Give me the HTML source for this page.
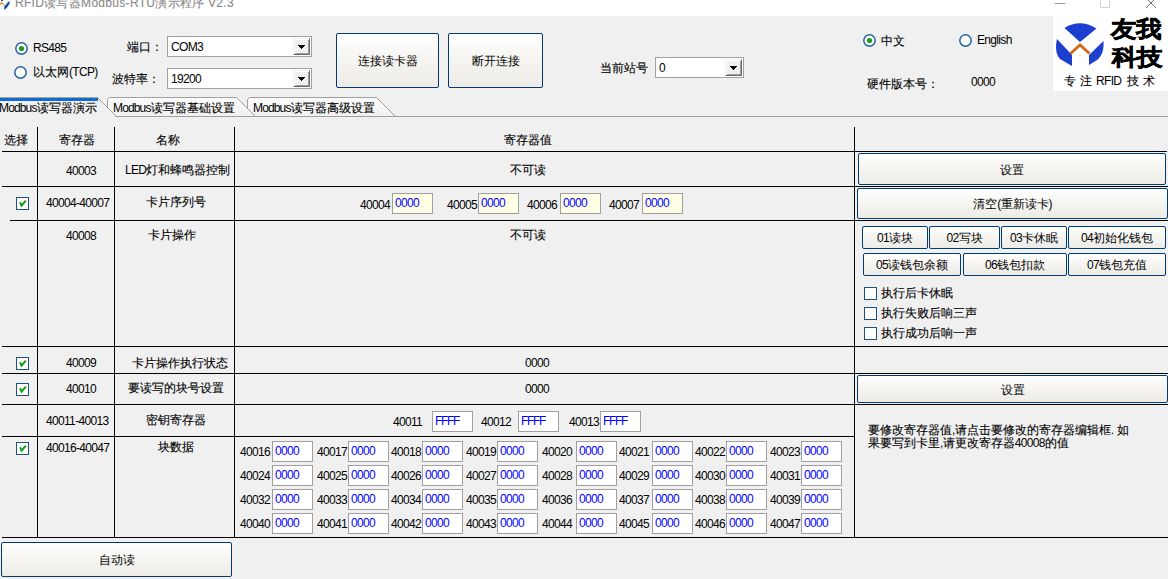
<!DOCTYPE html><html><head><meta charset="utf-8"><style>
*{margin:0;padding:0;box-sizing:border-box}
html,body{width:1168px;height:579px;overflow:hidden;background:#f0f0f0;font-family:"Liberation Sans",sans-serif;font-size:12px;color:#000;font-weight:500}
div{position:absolute}
.t{white-space:nowrap;line-height:12px;-webkit-text-stroke:0.12px currentColor}
.num{letter-spacing:-0.67px;-webkit-text-stroke:0}
.blue{color:#0000ff}
.ln{}
.btn{border:1px solid #003c74;border-radius:2px;background:linear-gradient(#ffffff 0%,#f7f6f3 40%,#ecebe6 100%)}
.bl{left:0;right:0;top:0;bottom:0;text-align:center;white-space:nowrap}
.cb{border:1px solid #a0a0a0;background:#fff}
.cbt{left:3px;top:4px;line-height:12px;white-space:nowrap}
.dd{right:1px;top:1px;width:17px;height:17px;border-style:solid;border-width:1px;border-color:#f0f0f0 #696969 #696969 #f0f0f0;background:#f0f0f0;box-shadow:inset 1px 1px 0 #fff,inset -1px -1px 0 #a0a0a0}
.tri{left:4px;top:6px;width:0;height:0;border-left:3.5px solid transparent;border-right:3.5px solid transparent;border-top:4px solid #000}
.rd{width:13px;height:13px;border-radius:50%;border:1px solid #2b5f95;background:#fff}
.dot{left:3px;top:3px;width:5px;height:5px;border-radius:50%;background:#21a121}
.ck{width:13px;height:13px;border:1px solid #1c5180;background:#fff}
.tb{width:41px;height:21px;border:1px solid #a0a0a0}
.tb span{position:absolute;left:2px;top:3px;line-height:12px}
</style></head><body>
<div style="left:0;top:0;width:1168px;height:16px;background:#fff"></div>
<div class="t" style="left:15px;top:-3px;font-size:12px;line-height:12px;color:#8a8a8a;letter-spacing:0.3px">RFID读写器Modbus-RTU演示程序 V2.3</div>
<svg style="position:absolute;left:15px;top:42px" width="13" height="13" viewBox="0 0 13 13"><circle cx="6.5" cy="6.5" r="5.7" fill="#fff" stroke="#24609e" stroke-width="1.5"/><circle cx="6.5" cy="6.5" r="2.6" fill="#1aa11a"/></svg>
<div class="t" style="left:33px;top:42px;"><span class="num">RS485</span></div>
<svg style="position:absolute;left:14px;top:66px" width="13" height="13" viewBox="0 0 13 13"><circle cx="6.5" cy="6.5" r="5.7" fill="#fff" stroke="#24609e" stroke-width="1.5"/></svg>
<div class="t" style="left:33px;top:66px;">以太网<span class="num">(TCP)</span></div>
<div class="t" style="left:127px;top:41px;">端口：</div>
<div class="t" style="left:112px;top:73px;">波特率：</div>
<div class="cb" style="left:167px;top:36px;width:145px;height:21px;"><div class="cbt"><span class="num">COM3</span></div><div class="dd"><svg style="position:absolute;left:4px;top:6px" width="7" height="4" shape-rendering="crispEdges"><rect x="0" y="0" width="7" height="1"/><rect x="1" y="1" width="5" height="1"/><rect x="2" y="2" width="3" height="1"/><rect x="3" y="3" width="1" height="1"/></svg></div></div>
<div class="cb" style="left:167px;top:68px;width:145px;height:21px;"><div class="cbt"><span class="num">19200</span></div><div class="dd"><svg style="position:absolute;left:4px;top:6px" width="7" height="4" shape-rendering="crispEdges"><rect x="0" y="0" width="7" height="1"/><rect x="1" y="1" width="5" height="1"/><rect x="2" y="2" width="3" height="1"/><rect x="3" y="3" width="1" height="1"/></svg></div></div>
<div class="btn" style="left:336px;top:33px;width:103px;height:55px;"><div class="bl" style="line-height:55px">连接读卡器</div></div>
<div class="btn" style="left:448px;top:33px;width:95px;height:55px;"><div class="bl" style="line-height:55px">断开连接</div></div>
<div class="t" style="left:600px;top:62px;">当前站号</div>
<div class="cb" style="left:655px;top:57px;width:89px;height:21px;"><div class="cbt"><span class="num">0</span></div><div class="dd"><svg style="position:absolute;left:4px;top:6px" width="7" height="4" shape-rendering="crispEdges"><rect x="0" y="0" width="7" height="1"/><rect x="1" y="1" width="5" height="1"/><rect x="2" y="2" width="3" height="1"/><rect x="3" y="3" width="1" height="1"/></svg></div></div>
<svg style="position:absolute;left:863px;top:34px" width="13" height="13" viewBox="0 0 13 13"><circle cx="6.5" cy="6.5" r="5.7" fill="#fff" stroke="#24609e" stroke-width="1.5"/><circle cx="6.5" cy="6.5" r="2.6" fill="#1aa11a"/></svg>
<div class="t" style="left:881px;top:35px;">中文</div>
<svg style="position:absolute;left:959px;top:34px" width="13" height="13" viewBox="0 0 13 13"><circle cx="6.5" cy="6.5" r="5.7" fill="#fff" stroke="#24609e" stroke-width="1.5"/></svg>
<div class="t" style="left:977px;top:34px;"><span class="num">English</span></div>
<div class="t" style="left:867px;top:78px;">硬件版本号：</div>
<div class="t" style="left:971px;top:76px;"><span class="num">0000</span></div>
<div style="left:1053px;top:16px;width:115px;height:75px;background:#fff"></div>
<div class="ln" style="left:115px;top:116px;width:1053px;height:1px;background:#a0a0a0"></div>
<div class="ln" style="left:2px;top:186px;width:1166px;height:1px;background:#000"></div>
<div class="ln" style="left:2px;top:346px;width:1166px;height:1px;background:#000"></div>
<div class="ln" style="left:2px;top:373px;width:1166px;height:1px;background:#000"></div>
<div class="ln" style="left:2px;top:404px;width:1166px;height:1px;background:#000"></div>
<div class="ln" style="left:2px;top:537px;width:1166px;height:1px;background:#000"></div>
<div class="ln" style="left:2px;top:151px;width:1165px;height:1px;background:#000"></div>
<div class="ln" style="left:2px;top:436px;width:853px;height:1px;background:#000"></div>
<div class="ln" style="left:10px;top:220px;width:1158px;height:1px;background:#000"></div>
<div class="ln" style="left:37px;top:127px;width:1px;height:411px;background:#000"></div>
<div class="ln" style="left:114px;top:127px;width:1px;height:411px;background:#000"></div>
<div class="ln" style="left:234px;top:127px;width:1px;height:411px;background:#000"></div>
<div class="ln" style="left:854px;top:127px;width:1px;height:411px;background:#000"></div>
<div class="t" style="left:4px;top:134px;">选择</div>
<div class="t" style="left:59px;top:134px;">寄存器</div>
<div class="t" style="left:156px;top:134px;">名称</div>
<div class="t" style="left:504px;top:134px;">寄存器值</div>
<div class="t" style="left:66px;top:165px;"><span class="num">40003</span></div>
<div class="t" style="left:125px;top:164px;"><span class="num">LED</span>灯和蜂鸣器控制</div>
<div class="t" style="left:510px;top:164px;">不可读</div>
<div class="btn" style="left:858px;top:153px;width:308px;height:32px;"><div class="bl" style="line-height:32px">设置</div></div>
<div class="ck" style="left:16px;top:197px"><svg width="11" height="11" viewBox="0 0 11 11" style="position:absolute;left:0;top:0"><path d="M3 4.2 L4.6 7.6 L8.8 2.6" stroke="#119e11" stroke-width="2" fill="none"/></svg></div>
<div class="t" style="left:46px;top:197px;"><span class="num">40004-40007</span></div>
<div class="t" style="left:146px;top:196px;">卡片序列号</div>
<div class="t" style="left:360px;top:199px;"><span class="num">40004</span></div>
<div class="tb" style="left:392px;top:193px;background:#ffffe6"><span class="num blue">0000</span></div>
<div class="t" style="left:447px;top:199px;"><span class="num">40005</span></div>
<div class="tb" style="left:478px;top:193px;background:#ffffe6"><span class="num blue">0000</span></div>
<div class="t" style="left:527px;top:199px;"><span class="num">40006</span></div>
<div class="tb" style="left:560px;top:193px;background:#ffffe6"><span class="num blue">0000</span></div>
<div class="t" style="left:609px;top:199px;"><span class="num">40007</span></div>
<div class="tb" style="left:642px;top:193px;background:#ffffe6"><span class="num blue">0000</span></div>
<div class="btn" style="left:857px;top:188px;width:311px;height:31px;"><div class="bl" style="line-height:31px">清空<span class="num">(</span>重新读卡<span class="num">)</span></div></div>
<div class="t" style="left:66px;top:230px;"><span class="num">40008</span></div>
<div class="t" style="left:148px;top:229px;">卡片操作</div>
<div class="t" style="left:510px;top:229px;">不可读</div>
<div class="btn" style="left:862px;top:226px;width:66px;height:23px;"><div class="bl" style="line-height:23px"><span class="num">01</span>读块</div></div>
<div class="btn" style="left:929px;top:226px;width:71px;height:23px;"><div class="bl" style="line-height:23px"><span class="num">02</span>写块</div></div>
<div class="btn" style="left:1001px;top:226px;width:66px;height:23px;"><div class="bl" style="line-height:23px"><span class="num">03</span>卡休眠</div></div>
<div class="btn" style="left:1068px;top:226px;width:98px;height:23px;"><div class="bl" style="line-height:23px"><span class="num">04</span>初始化钱包</div></div>
<div class="btn" style="left:863px;top:253px;width:98px;height:23px;"><div class="bl" style="line-height:23px"><span class="num">05</span>读钱包余额</div></div>
<div class="btn" style="left:963px;top:253px;width:104px;height:23px;"><div class="bl" style="line-height:23px"><span class="num">06</span>钱包扣款</div></div>
<div class="btn" style="left:1068px;top:253px;width:98px;height:23px;"><div class="bl" style="line-height:23px"><span class="num">07</span>钱包充值</div></div>
<div class="ck" style="left:864px;top:287px"></div>
<div class="t" style="left:881px;top:287px;">执行后卡休眠</div>
<div class="ck" style="left:864px;top:307px"></div>
<div class="t" style="left:881px;top:307px;">执行失败后响三声</div>
<div class="ck" style="left:864px;top:327px"></div>
<div class="t" style="left:881px;top:327px;">执行成功后响一声</div>
<div class="ck" style="left:16px;top:357px"><svg width="11" height="11" viewBox="0 0 11 11" style="position:absolute;left:0;top:0"><path d="M3 4.2 L4.6 7.6 L8.8 2.6" stroke="#119e11" stroke-width="2" fill="none"/></svg></div>
<div class="t" style="left:66px;top:357px;"><span class="num">40009</span></div>
<div class="t" style="left:132px;top:357px;">卡片操作执行状态</div>
<div class="t" style="left:525px;top:357px;"><span class="num">0000</span></div>
<div class="ck" style="left:16px;top:383px"><svg width="11" height="11" viewBox="0 0 11 11" style="position:absolute;left:0;top:0"><path d="M3 4.2 L4.6 7.6 L8.8 2.6" stroke="#119e11" stroke-width="2" fill="none"/></svg></div>
<div class="t" style="left:66px;top:383px;"><span class="num">40010</span></div>
<div class="t" style="left:128px;top:382px;">要读写的块号设置</div>
<div class="t" style="left:525px;top:383px;"><span class="num">0000</span></div>
<div class="btn" style="left:857px;top:375px;width:311px;height:28px;"><div class="bl" style="line-height:28px">设置</div></div>
<div class="t" style="left:46px;top:415px;"><span class="num">40011-40013</span></div>
<div class="t" style="left:146px;top:414px;">密钥寄存器</div>
<div class="t" style="left:393px;top:416px;"><span class="num">40011</span></div>
<div class="tb" style="left:432px;top:411px;background:#fff"><span class="num blue" style="letter-spacing:-1.35px">FFFF</span></div>
<div class="t" style="left:481px;top:416px;"><span class="num">40012</span></div>
<div class="tb" style="left:518px;top:411px;background:#fff"><span class="num blue" style="letter-spacing:-1.35px">FFFF</span></div>
<div class="t" style="left:569px;top:416px;"><span class="num">40013</span></div>
<div class="tb" style="left:600px;top:411px;background:#fff"><span class="num blue" style="letter-spacing:-1.35px">FFFF</span></div>
<div class="t" style="left:868px;top:424px;">要修改寄存器值<span class="num">,</span>请点击要修改的寄存器编辑框<span class="num">.</span> 如</div>
<div class="t" style="left:868px;top:437px;">果要写到卡里<span class="num">,</span>请更改寄存器<span class="num">40008</span>的值</div>
<div class="ck" style="left:16px;top:442px"><svg width="11" height="11" viewBox="0 0 11 11" style="position:absolute;left:0;top:0"><path d="M3 4.2 L4.6 7.6 L8.8 2.6" stroke="#119e11" stroke-width="2" fill="none"/></svg></div>
<div class="t" style="left:46px;top:442px;"><span class="num">40016-40047</span></div>
<div class="t" style="left:158px;top:441px;">块数据</div>
<div class="t" style="left:240px;top:446px;"><span class="num">40016</span></div>
<div class="tb" style="left:272px;top:441px;background:#fff"><span class="num blue">0000</span></div>
<div class="t" style="left:317px;top:446px;"><span class="num">40017</span></div>
<div class="tb" style="left:348px;top:441px;background:#fff"><span class="num blue">0000</span></div>
<div class="t" style="left:391px;top:446px;"><span class="num">40018</span></div>
<div class="tb" style="left:422px;top:441px;background:#fff"><span class="num blue">0000</span></div>
<div class="t" style="left:466px;top:446px;"><span class="num">40019</span></div>
<div class="tb" style="left:497px;top:441px;background:#fff"><span class="num blue">0000</span></div>
<div class="t" style="left:542px;top:446px;"><span class="num">40020</span></div>
<div class="tb" style="left:576px;top:441px;background:#fff"><span class="num blue">0000</span></div>
<div class="t" style="left:619px;top:446px;"><span class="num">40021</span></div>
<div class="tb" style="left:652px;top:441px;background:#fff"><span class="num blue">0000</span></div>
<div class="t" style="left:695px;top:446px;"><span class="num">40022</span></div>
<div class="tb" style="left:726px;top:441px;background:#fff"><span class="num blue">0000</span></div>
<div class="t" style="left:770px;top:446px;"><span class="num">40023</span></div>
<div class="tb" style="left:801px;top:441px;background:#fff"><span class="num blue">0000</span></div>
<div class="t" style="left:240px;top:470px;"><span class="num">40024</span></div>
<div class="tb" style="left:272px;top:465px;background:#fff"><span class="num blue">0000</span></div>
<div class="t" style="left:317px;top:470px;"><span class="num">40025</span></div>
<div class="tb" style="left:348px;top:465px;background:#fff"><span class="num blue">0000</span></div>
<div class="t" style="left:391px;top:470px;"><span class="num">40026</span></div>
<div class="tb" style="left:422px;top:465px;background:#fff"><span class="num blue">0000</span></div>
<div class="t" style="left:466px;top:470px;"><span class="num">40027</span></div>
<div class="tb" style="left:497px;top:465px;background:#fff"><span class="num blue">0000</span></div>
<div class="t" style="left:542px;top:470px;"><span class="num">40028</span></div>
<div class="tb" style="left:576px;top:465px;background:#fff"><span class="num blue">0000</span></div>
<div class="t" style="left:619px;top:470px;"><span class="num">40029</span></div>
<div class="tb" style="left:652px;top:465px;background:#fff"><span class="num blue">0000</span></div>
<div class="t" style="left:695px;top:470px;"><span class="num">40030</span></div>
<div class="tb" style="left:726px;top:465px;background:#fff"><span class="num blue">0000</span></div>
<div class="t" style="left:770px;top:470px;"><span class="num">40031</span></div>
<div class="tb" style="left:801px;top:465px;background:#fff"><span class="num blue">0000</span></div>
<div class="t" style="left:240px;top:494px;"><span class="num">40032</span></div>
<div class="tb" style="left:272px;top:489px;background:#fff"><span class="num blue">0000</span></div>
<div class="t" style="left:317px;top:494px;"><span class="num">40033</span></div>
<div class="tb" style="left:348px;top:489px;background:#fff"><span class="num blue">0000</span></div>
<div class="t" style="left:391px;top:494px;"><span class="num">40034</span></div>
<div class="tb" style="left:422px;top:489px;background:#fff"><span class="num blue">0000</span></div>
<div class="t" style="left:466px;top:494px;"><span class="num">40035</span></div>
<div class="tb" style="left:497px;top:489px;background:#fff"><span class="num blue">0000</span></div>
<div class="t" style="left:542px;top:494px;"><span class="num">40036</span></div>
<div class="tb" style="left:576px;top:489px;background:#fff"><span class="num blue">0000</span></div>
<div class="t" style="left:619px;top:494px;"><span class="num">40037</span></div>
<div class="tb" style="left:652px;top:489px;background:#fff"><span class="num blue">0000</span></div>
<div class="t" style="left:695px;top:494px;"><span class="num">40038</span></div>
<div class="tb" style="left:726px;top:489px;background:#fff"><span class="num blue">0000</span></div>
<div class="t" style="left:770px;top:494px;"><span class="num">40039</span></div>
<div class="tb" style="left:801px;top:489px;background:#fff"><span class="num blue">0000</span></div>
<div class="t" style="left:240px;top:518px;"><span class="num">40040</span></div>
<div class="tb" style="left:272px;top:513px;background:#fff"><span class="num blue">0000</span></div>
<div class="t" style="left:317px;top:518px;"><span class="num">40041</span></div>
<div class="tb" style="left:348px;top:513px;background:#fff"><span class="num blue">0000</span></div>
<div class="t" style="left:391px;top:518px;"><span class="num">40042</span></div>
<div class="tb" style="left:422px;top:513px;background:#fff"><span class="num blue">0000</span></div>
<div class="t" style="left:466px;top:518px;"><span class="num">40043</span></div>
<div class="tb" style="left:497px;top:513px;background:#fff"><span class="num blue">0000</span></div>
<div class="t" style="left:542px;top:518px;"><span class="num">40044</span></div>
<div class="tb" style="left:576px;top:513px;background:#fff"><span class="num blue">0000</span></div>
<div class="t" style="left:619px;top:518px;"><span class="num">40045</span></div>
<div class="tb" style="left:652px;top:513px;background:#fff"><span class="num blue">0000</span></div>
<div class="t" style="left:695px;top:518px;"><span class="num">40046</span></div>
<div class="tb" style="left:726px;top:513px;background:#fff"><span class="num blue">0000</span></div>
<div class="t" style="left:770px;top:518px;"><span class="num">40047</span></div>
<div class="tb" style="left:801px;top:513px;background:#fff"><span class="num blue">0000</span></div>
<div class="btn" style="left:1px;top:542px;width:231px;height:35px;"><div class="bl" style="line-height:35px">自动读</div></div>
<svg style="position:absolute;left:0;top:90px" width="1168" height="30" viewBox="0 90 1168 30">
<defs><linearGradient id="tg" x1="0" y1="0" x2="0" y2="1"><stop offset="0" stop-color="#fcfcfc"/><stop offset="1" stop-color="#f0f0f0"/></linearGradient></defs>
<path d="M247.5 116.5 V99.5 L249.5 97.5 H376.5 L395.5 116.5 Z" fill="url(#tg)"/>
<path d="M247.5 116.5 V99.5 L249.5 97.5 H376.5 L395.5 116.5" fill="none" stroke="#a0a0a0"/>
<path d="M107.5 116.5 V99.5 L109.5 97.5 H236.5 L255.5 116.5 Z" fill="url(#tg)"/>
<path d="M107.5 116.5 V99.5 L109.5 97.5 H236.5 L255.5 116.5" fill="none" stroke="#a0a0a0"/>
<path d="M-2 97 H97 L117 117 H-2 Z" fill="#f0f0f0"/>
<path d="M-2 97.5 H97.5 L116.5 116.5" fill="none" stroke="#a8a29a"/>
<rect x="0" y="98" width="98" height="3" fill="#0a6fd5"/>
<line x1="115" y1="116.5" x2="1168" y2="116.5" stroke="#a0a0a0"/>
</svg>
<div class="t" style="left:-1px;top:102px;"><span class="num" style="letter-spacing:-0.85px">Modbus</span>读写器演示</div>
<div class="t" style="left:113px;top:102px;"><span class="num" style="letter-spacing:-0.85px">Modbus</span>读写器基础设置</div>
<div class="t" style="left:253px;top:102px;"><span class="num" style="letter-spacing:-0.85px">Modbus</span>读写器高级设置</div>
<svg style="position:absolute;left:1053px;top:16px" width="115" height="75" viewBox="1053 16 115 75">
<rect x="1053" y="16" width="115" height="75" fill="#fff"/>
<path d="M1064.5 28 Q1080 18.5 1096.5 28.5 L1080 42 Z" fill="#1c3fcf"/>
<path d="M1057 39 C1055 47 1056 55 1060 59 L1072 66 L1072 55 Z" fill="#1c3fcf"/>
<path d="M1103.5 41 C1104 50 1102 56 1097 60 L1089 65 L1089 55 Z" fill="#1c3fcf"/>
<polyline points="1070.5,53.5 1080,45 1089.5,53.5" fill="none" stroke="#d2691e" stroke-width="3"/>
</svg>
<div class="t" style="left:1111px;top:17px;font-size:26px;line-height:26px;font-weight:900;letter-spacing:-1px;transform:scaleY(0.9);transform-origin:0 0;-webkit-text-stroke:0.6px #000">友我</div>
<div class="t" style="left:1112px;top:45px;font-size:26px;line-height:26px;font-weight:900;letter-spacing:-1px;transform:scaleY(0.9);transform-origin:0 0;-webkit-text-stroke:0.6px #000">科技</div>
<div class="t" style="left:1064px;top:75px;">专</div>
<div class="t" style="left:1080px;top:75px;">注</div>
<div class="t" style="left:1096px;top:75px;font-size:12px"><span class="num">RFID</span></div>
<div class="t" style="left:1127px;top:75px;">技</div>
<div class="t" style="left:1143px;top:75px;">术</div>
<div style="left:1055px;top:3px;width:10px;height:1px;background:#999"></div>
<div style="left:1100px;top:-2px;width:10px;height:10px;border:1px solid #d5d5d5"></div>
<svg style="position:absolute;left:1146px;top:-2px" width="10" height="10" shape-rendering="crispEdges" fill="#707070"><rect x="0" y="9" width="1" height="1"/><rect x="1" y="8" width="1" height="1"/><rect x="2" y="7" width="1" height="1"/><rect x="3" y="6" width="1" height="1"/><rect x="4" y="5" width="1" height="1"/><rect x="5" y="4" width="1" height="1"/><rect x="6" y="3" width="1" height="1"/><rect x="7" y="2" width="1" height="1"/><rect x="8" y="1" width="1" height="1"/><rect x="9" y="0" width="1" height="1"/><rect x="0" y="0" width="1" height="1"/><rect x="1" y="1" width="1" height="1"/><rect x="2" y="2" width="1" height="1"/><rect x="3" y="3" width="1" height="1"/><rect x="4" y="4" width="1" height="1"/><rect x="5" y="5" width="1" height="1"/><rect x="6" y="6" width="1" height="1"/><rect x="7" y="7" width="1" height="1"/><rect x="8" y="8" width="1" height="1"/><rect x="9" y="9" width="1" height="1"/></svg>
<svg style="position:absolute;left:0;top:0" width="12" height="12" viewBox="0 0 12 12"><polyline points="-0.5,4.6 1.7,2.6 4.6,5.4" fill="none" stroke="#ee8a2a" stroke-width="1.3"/><path d="M4 9.9 L4.4 6.6 L7.8 2.6 L9.9 1.1 L9.4 4 L6.6 8 Z" fill="#0c47b0"/><rect x="1" y="0" width="2" height="1" fill="#0c47b0"/></svg>
</body></html>
